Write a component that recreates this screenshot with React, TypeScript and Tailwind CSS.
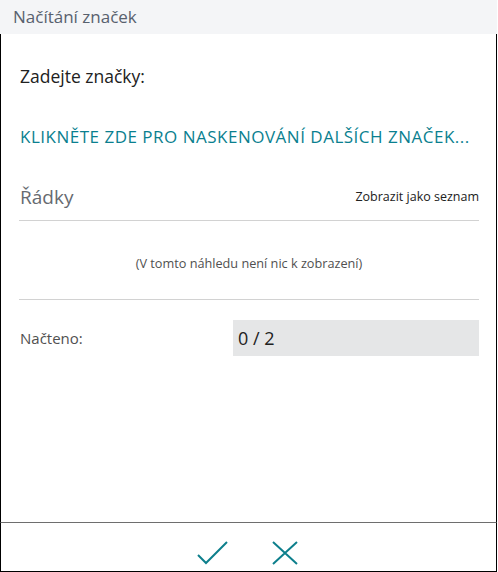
import React from "react";

export default function App() {
  return (
    <div
      className="w-[497px] h-[572px] flex flex-col bg-white"
      style={{ fontFamily: '"Open Sans", "Noto Sans", sans-serif' }}
    >
      <div className="h-[34px] shrink-0 bg-[#f4f5f7] flex items-center pl-[13px] text-[17px] text-[#58616e]">
        Načítání značek
      </div>
      <div className="flex-1 flex flex-col border-l border-r border-black px-[18px] pr-[17px] pt-[27px]">
        <div className="h-[30px] flex items-center text-[17.5px] text-[#212121] pl-[1px]">
          Zadejte značky:
        </div>
        <div className="h-[30px] mt-[31px] flex items-center text-[17px] text-[#0a7f8f] pl-[1px] tracking-[0.5px] whitespace-nowrap">
          KLIKNĚTE ZDE PRO NASKENOVÁNÍ DALŠÍCH ZNAČEK...
        </div>
        <div className="h-[39px] mt-[30px] flex items-center justify-between border-b border-[#d2d2d2] pb-[8px]">
          <span className="text-[19px] text-[#666a70] pl-[1px]">Řádky</span>
          <span className="text-[12.5px] text-[#212121]">Zobrazit jako seznam</span>
        </div>
        <div className="h-[79px] flex items-center justify-center border-b border-[#d2d2d2] pt-[8px] text-[12.7px] text-[#505050]">
          (V tomto náhledu není nic k zobrazení)
        </div>
        <div className="mt-[20px] flex items-center">
          <div className="w-[214px] text-[15px] text-[#505050] pl-[1px]">Načteno:</div>
          <div className="flex-1 h-[36px] bg-[#e5e6e7] flex items-center pl-[5px] text-[18px] text-[#212121]">
            0 / 2
          </div>
        </div>
      </div>
      <div className="h-[50px] shrink-0 border-t border-[#6e6e6e] border-l border-r border-b border-l-black border-r-black border-b-black flex items-start justify-start pt-[18px] gap-[43px] pl-[196px]">
        <svg width="32" height="24" viewBox="0 0 32 24">
          <path d="M1 14 L9 22 L30 1" fill="none" stroke="#0d7f8c" strokeWidth="2" />
        </svg>
        <svg width="26" height="24" viewBox="0 0 26 24">
          <path d="M1 1 L25 23 M25 1 L1 23" fill="none" stroke="#0d7f8c" strokeWidth="2" />
        </svg>
      </div>
    </div>
  );
}
